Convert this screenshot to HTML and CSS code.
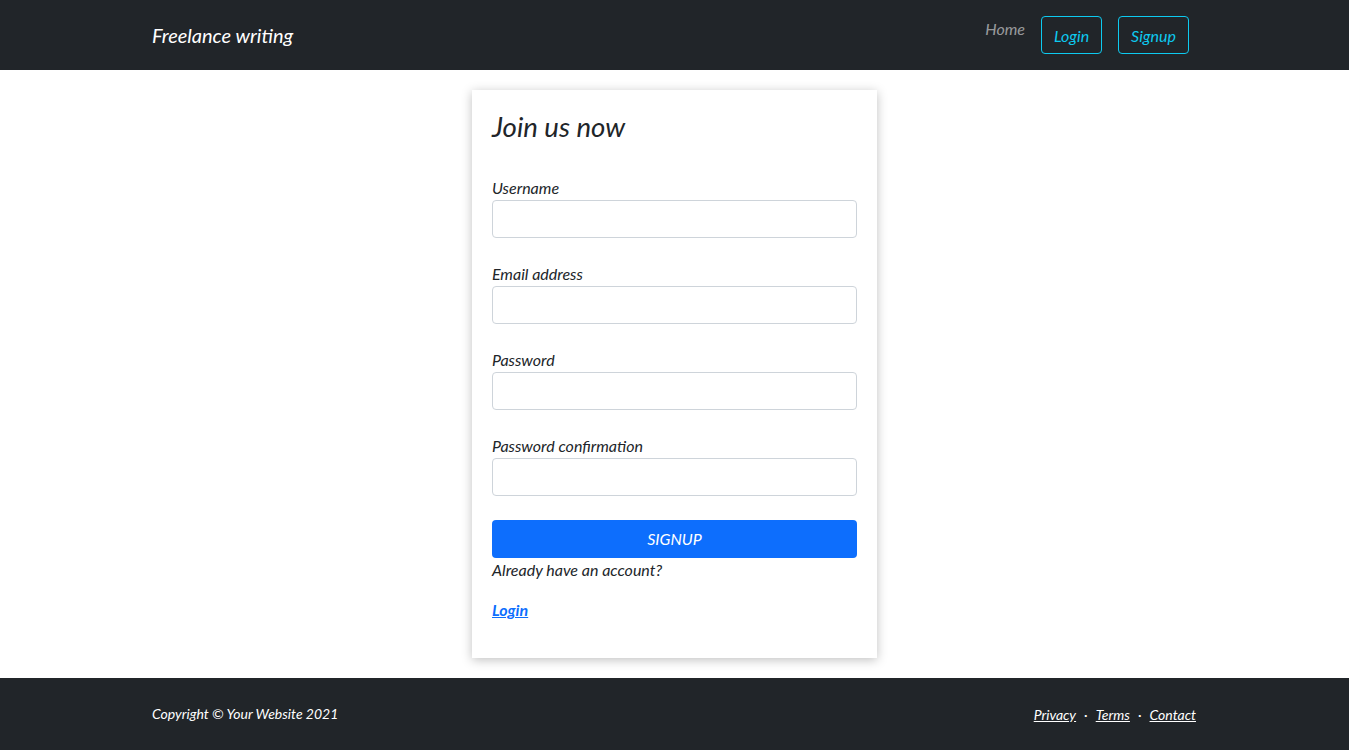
FILE: index.html
```html
<!DOCTYPE html>
<html lang="en">
<head>
<meta charset="utf-8">
<title>Freelance writing</title>
<link rel="stylesheet" href="styles.css">
</head>
<body>
<header class="navbar">
  <div class="container nav-inner">
    <a class="brand" href="#">Freelance writing</a>
    <nav class="nav-links">
      <a class="nav-home" href="#">Home</a>
      <a class="btn-outline" href="#">Login</a>
      <a class="btn-outline" href="#">Signup</a>
    </nav>
  </div>
</header>
<main class="main">
  <div class="card">
    <h1 class="card-title">Join us now</h1>
    <form class="form">
      <div class="field">
        <label class="label">Username</label>
        <input class="input" type="text">
      </div>
      <div class="field">
        <label class="label">Email address</label>
        <input class="input" type="email">
      </div>
      <div class="field">
        <label class="label">Password</label>
        <input class="input" type="password">
      </div>
      <div class="field">
        <label class="label">Password confirmation</label>
        <input class="input" type="password">
      </div>
      <button class="btn-primary" type="button">SIGNUP</button>
    </form>
    <p class="already">Already have an account?</p>
    <a class="login-link" href="#">Login</a>
  </div>
</main>
<footer class="footer">
  <div class="container footer-inner">
    <div class="copyright">Copyright © Your Website 2021</div>
    <div class="footer-links">
      <a href="#">Privacy</a><span class="dot">·</span><a href="#">Terms</a><span class="dot">·</span><a href="#">Contact</a>
    </div>
  </div>
</footer>
</body>
</html>
```
FILE: styles.css
```css
* { box-sizing: border-box; }
html, body { margin: 0; padding: 0; }
body {
  font-family: Lato, "Open Sans", sans-serif;
  font-style: italic;
  color: #212529;
  background: #fff;
  font-size: 16px;
  line-height: 1.5;
}
.container {
  width: 1045px;
  margin: 0 auto;
}
.navbar {
  background: #212529;
  height: 70px;
}
.nav-inner {
  height: 70px;
  display: flex;
  align-items: center;
  justify-content: space-between;
  padding-right: 8px;
}
.brand {
  color: #fff;
  text-decoration: none;
  font-size: 20px;
  line-height: 30px;
}
.nav-links {
  display: flex;
  align-items: center;
  gap: 16px;
}
.nav-home {
  color: rgba(255,255,255,.55);
  text-decoration: none;
  font-size: 16px;
  margin-bottom: 12px;
}
.btn-outline {
  display: inline-block;
  color: #0dcaf0;
  border: 1px solid #0dcaf0;
  border-radius: 4px;
  text-decoration: none;
  font-size: 16px;
  line-height: 24px;
  padding: 7px 12px 5px;
}
.main {
  padding: 20px 0;
  display: flex;
  justify-content: center;
}
.card {
  width: 405px;
  background: #fff;
  padding: 20px 20px 36px;
  box-shadow: 0 2px 10px rgba(0,0,0,.25);
}
.card-title {
  margin: 0 0 32px;
  font-weight: 400;
  font-size: 27.6px;
  line-height: 34px;
}
.field {
  margin-bottom: 24px;
}
.label {
  display: block;
  font-size: 16px;
  line-height: 24px;
}
.input {
  display: block;
  width: 100%;
  height: 38px;
  border: 1px solid #ced4da;
  border-radius: 4px;
  font: inherit;
  padding: 6px 12px;
  background: #fff;
}
.btn-primary {
  display: block;
  width: 100%;
  height: 38px;
  background: #0d6efd;
  color: #fff;
  border: none;
  border-radius: 4px;
  font: inherit;
  font-size: 16px;
}
.already {
  margin: 0 0 16px;
  font-size: 16px;
  line-height: 24px;
}
.login-link {
  color: #0d6efd;
  font-weight: 700;
  font-size: 16px;
  line-height: 24px;
  display: inline-block;
}
.footer {
  background: #212529;
  height: 72px;
}
.footer-inner {
  height: 72px;
  display: flex;
  align-items: center;
  justify-content: space-between;
  padding-bottom: 2px;
}
.copyright {
  color: #fff;
  font-size: 14px;
}
.footer-links {
  font-size: 14px;
  color: #fff;
  padding-top: 2px;
  padding-right: 1px;
}
.footer-links a {
  color: #fff;
}
.dot {
  margin: 0 8px;
}
```
